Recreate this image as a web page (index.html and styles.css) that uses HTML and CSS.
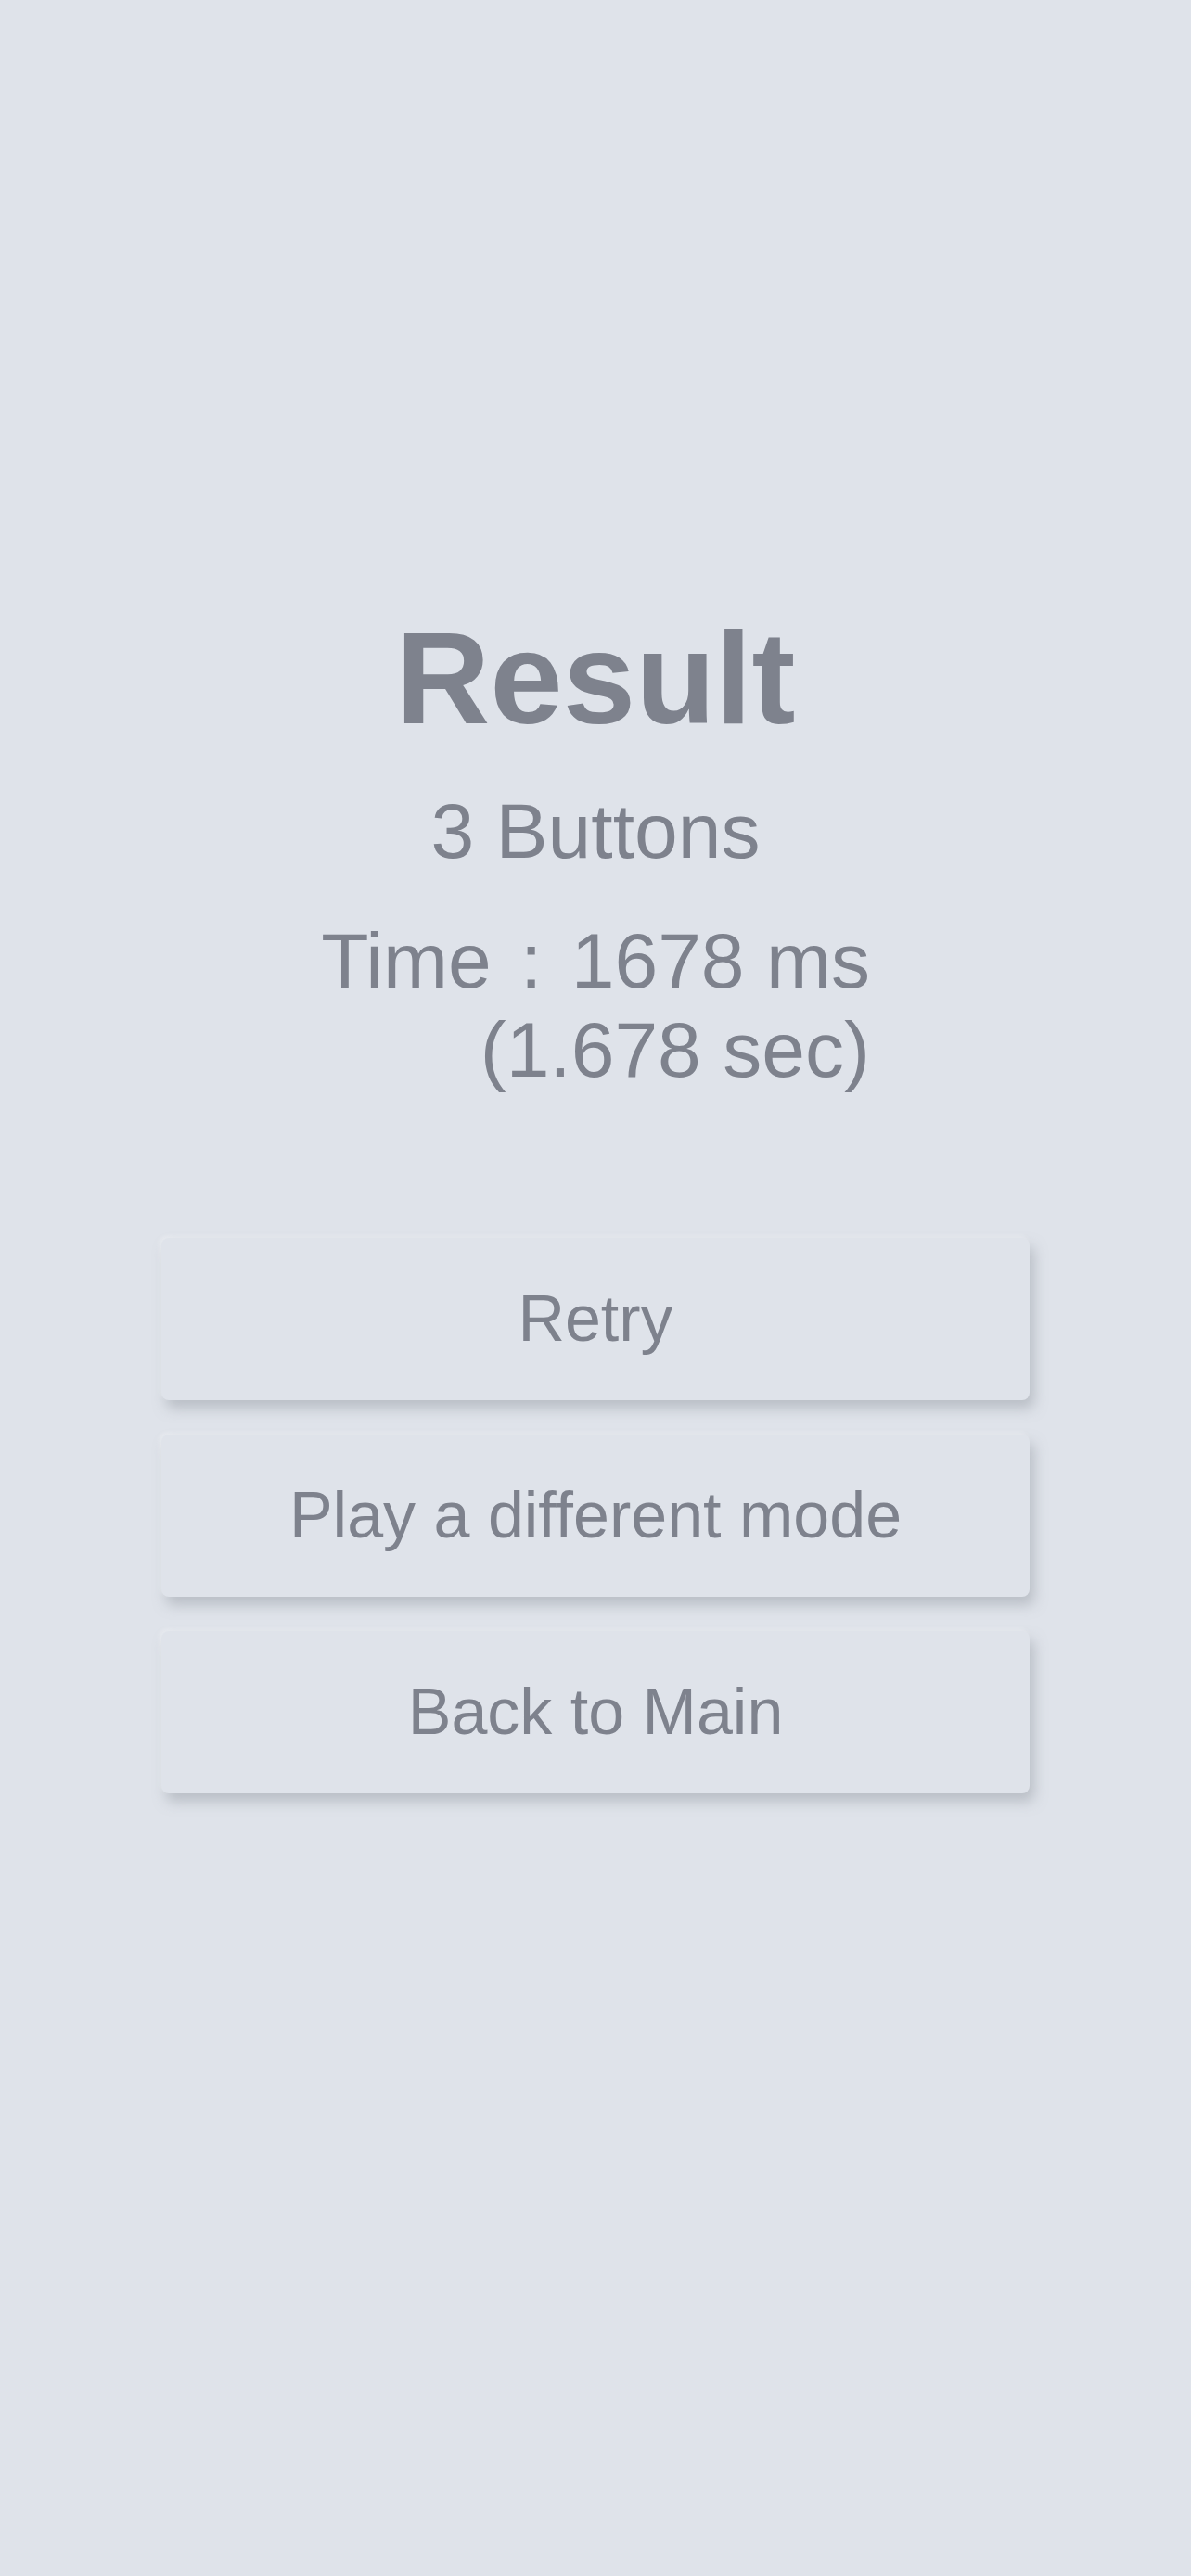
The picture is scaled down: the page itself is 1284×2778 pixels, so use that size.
FILE: index.html
```html
<!DOCTYPE html>
<html>
<head>
  <title>Result</title>
  <link rel="stylesheet" href="styles.css">
</head>
<body>
  <div class="container">
    <h1 class="title">Result</h1>
    <div class="mode">3 Buttons</div>
    <div class="time">
      <span>Time <span class="colon">:</span> 1678 ms</span>
      <span>(1.678 sec)</span>
    </div>

    <div class="actions">
      <button class="btn" type="button">Retry</button>
      <button class="btn" type="button">Play a different mode</button>
      <button class="btn" type="button">Back to Main</button>
    </div>
  </div>
</body>
</html>
```

FILE: styles.css
```css
html,
body {
  margin: 0;
  padding: 0;
  background-color: #dfe3ea;
}
body {
  font-family: "Liberation Sans", Arial, sans-serif;
  color: #7e828d;
  line-height: 1.15;
}
.container {
  display: flex;
  flex-direction: column;
  align-items: center;
  padding-top: 650px;
  min-height: 2128px;
}
.title {
  margin: 0;
  font-size: 141px;
  font-weight: bold;
  line-height: 1.15;
}
.mode {
  margin-top: 36px;
  font-size: 84px;
}
.time {
  display: flex;
  flex-direction: column;
  align-items: flex-end;
  margin-top: 43px;
  font-size: 84px;
}
.colon {
  margin: 0 8px;
}
.actions {
  display: flex;
  flex-direction: column;
  gap: 37px;
  width: 936px;
  margin-top: 154px;
}
.btn {
  display: block;
  width: 100%;
  height: 175px;
  padding: 0;
  border: none;
  border-radius: 8px;
  background-color: #dfe3ea;
  color: #7e828d;
  font-family: "Liberation Sans", Arial, sans-serif;
  font-size: 70px;
  cursor: pointer;
  box-shadow: 5px 9px 14px rgba(150, 156, 164, 0.5),
    -2px -2px 5px rgba(255, 255, 255, 0.35);
}
```
